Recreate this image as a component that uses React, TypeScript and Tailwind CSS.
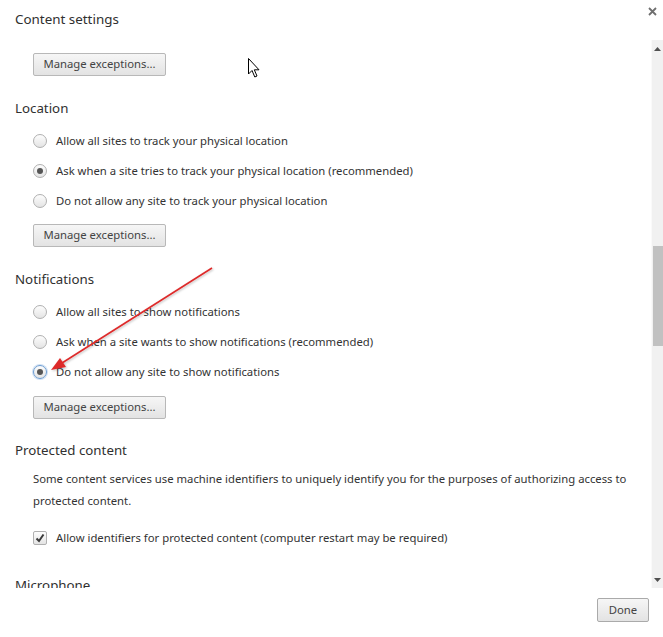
import React from "react";

const font = { fontFamily: '"Segoe UI", "Noto Sans", "Open Sans", sans-serif' };

function Radio({ checked, focused }: { checked?: boolean; focused?: boolean }) {
  return (
    <span
      className={`relative flex h-[14px] w-[14px] shrink-0 items-center justify-center rounded-full border bg-gradient-to-b from-[#fdfdfd] to-[#e4e4e4] ${
        focused ? "border-[#6b9bd1] shadow-[0_0_0_1px_#cfe0f3]" : "border-[#b0b0b0]"
      }`}
    >
      {checked && <span className="h-[6px] w-[6px] rounded-full bg-[#555]" />}
    </span>
  );
}

function RadioRow({
  label,
  checked,
  focused,
}: {
  label: string;
  checked?: boolean;
  focused?: boolean;
}) {
  return (
    <div className="flex h-[30px] items-center gap-[9px] pl-[33px]">
      <Radio checked={checked} focused={focused} />
      <span className="text-[11.3px] text-[#333]">{label}</span>
    </div>
  );
}

function ManageButton({ className = "" }: { className?: string }) {
  return (
    <div className={`flex pl-[33px] ${className}`}>
      <button className="block h-[23px] w-[133px] rounded-[2px] border border-[#b8b8b8] bg-gradient-to-b from-[#f6f6f6] to-[#e3e3e3] text-[11.3px] text-[#444]">
        Manage exceptions...
      </button>
    </div>
  );
}

function Heading({ children, className = "" }: { children: React.ReactNode; className?: string }) {
  return (
    <div className={`flex h-[30px] items-center pl-[15px] text-[13.3px] text-[#303030] ${className}`}>
      {children}
    </div>
  );
}

export default function App() {
  return (
    <div className="relative h-[637px] w-[663px] overflow-hidden bg-white" style={font}>
      {/* Header */}
      <div className="flex h-[40px] items-start justify-between">
        <div className="pl-[15px] pt-[9px] text-[13.4px] text-[#303030]">Content settings</div>
        <svg className="mr-[6px] mt-[7px]" width="9" height="9" viewBox="0 0 9 9">
          <path d="M1 1 L8 8 M8 1 L1 8" stroke="#6f6f6f" strokeWidth="1.8" />
        </svg>
      </div>

      {/* Scroll area */}
      <div className="flex h-[548px]">
        <div className="flex-1 overflow-hidden">
          <ManageButton className="pt-[13px]" />

          <Heading className="mt-[18px]">Location</Heading>
          <div className="mt-[2px]">
            <RadioRow label="Allow all sites to track your physical location" />
            <RadioRow label="Ask when a site tries to track your physical location (recommended)" checked />
            <RadioRow label="Do not allow any site to track your physical location" />
          </div>
          <ManageButton className="mt-[8px]" />

          <Heading className="mt-[18px]">Notifications</Heading>
          <div className="mt-[2px]">
            <RadioRow label="Allow all sites to show notifications" />
            <RadioRow label="Ask when a site wants to show notifications (recommended)" />
            <RadioRow label="Do not allow any site to show notifications" checked focused />
          </div>
          <ManageButton className="mt-[9px]" />

          <Heading className="mt-[17px]">Protected content</Heading>
          <p className="mt-[2px] pl-[33px] pr-[6px] text-[11.3px] leading-[22px] text-[#333]">
            Some content services use machine identifiers to uniquely identify you for the purposes of authorizing access to
            protected content.
          </p>
          <div className="mt-[11px] flex h-[30px] items-center gap-[9px] pl-[33px]">
            <span className="flex h-[14px] w-[14px] items-center justify-center rounded-[2px] border border-[#b0b0b0] bg-gradient-to-b from-[#fdfdfd] to-[#e4e4e4]">
              <svg width="10" height="10" viewBox="0 0 10 10">
                <path d="M1.5 5.5 L4 8 L8.5 1.5" fill="none" stroke="#3a3a3a" strokeWidth="2" />
              </svg>
            </span>
            <span className="text-[11.3px] text-[#333]">
              Allow identifiers for protected content (computer restart may be required)
            </span>
          </div>
          <Heading className="mt-[18px]">Microphone</Heading>
        </div>

        {/* Scrollbar */}
        <div className="flex w-[12px] flex-col border-l border-[#fafafa] bg-[#f1f1f1]">
          <div className="flex h-[17px] items-center justify-center">
            <svg width="7" height="4" viewBox="0 0 7 4">
              <path d="M0 4 L3.5 0 L7 4 Z" fill="#505050" />
            </svg>
          </div>
          <div className="relative flex-1">
            <div className="absolute left-[1px] right-0 top-[189px] h-[100px] bg-[#c1c1c1]" />
          </div>
          <div className="flex h-[17px] items-center justify-center">
            <svg width="7" height="4" viewBox="0 0 7 4">
              <path d="M0 0 L3.5 4 L7 0 Z" fill="#505050" />
            </svg>
          </div>
        </div>
      </div>

      {/* Footer */}
      <div className="flex h-[49px] items-start justify-end pr-[14px] pt-[10px]">
        <button className="block h-[24px] w-[52px] rounded-[2px] border border-[#aaa] bg-gradient-to-b from-[#f6f6f6] to-[#e3e3e3] text-[11.3px] text-[#444]">
          Done
        </button>
      </div>

      {/* Annotation arrow */}
      <svg className="pointer-events-none absolute left-0 top-0" width="663" height="637">
        <defs>
          <filter id="sh" x="-10%" y="-10%" width="130%" height="130%">
            <feDropShadow dx="1" dy="1" stdDeviation="1" floodColor="#000" floodOpacity="0.25" />
          </filter>
        </defs>
        <g filter="url(#sh)">
          <line x1="212" y1="268" x2="62" y2="363" stroke="#dd2a2a" strokeWidth="1.6" />
          <path d="M51 370 L60 358 L66 367 Z" fill="#dd2a2a" />
        </g>
      </svg>

      {/* Mouse cursor */}
      <svg className="pointer-events-none absolute left-[248px] top-[58px]" width="14" height="22" viewBox="0 0 14 22">
        <path d="M0.5 0.5 L0.5 16 L4 12.5 L6.8 19 L9 18 L6.3 11.8 L11 11.8 Z" fill="#fff" stroke="#000" strokeWidth="1" />
      </svg>
    </div>
  );
}
